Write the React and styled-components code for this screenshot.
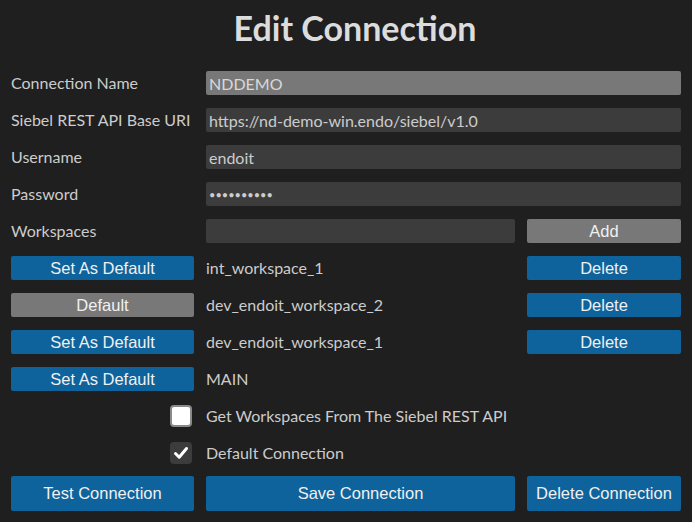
import React from 'react';
import styled, { createGlobalStyle } from 'styled-components';

const GlobalStyle = createGlobalStyle`
    html, body {
        margin: 0;
        padding: 0;
        background-color: #1f1f1f;
    }
    body {
        font-family: Lato, "Noto Sans", sans-serif;
        color: #cccccc;
    }
`;

const PageStyle = styled.div`
    width: 692px;
    height: 522px;
    box-sizing: border-box;
    padding: 0 11px;
    background-color: #1f1f1f;
`;

const TitleStyle = styled.h1`
    margin: 0;
    height: 71px;
    padding: 8px 0 0 18px;
    box-sizing: border-box;
    text-align: center;
    font-family: Lato, "Noto Sans", sans-serif;
    font-size: 34px;
    font-weight: 700;
    color: #dcdcdc;
    line-height: 40px;
`;

const FormGridStyle = styled.div`
    display: grid;
    grid-template-columns: 183px 309px 154px;
    grid-auto-rows: 24px;
    column-gap: 12px;
    row-gap: 13px;
`;

const LabelStyle = styled.label`
    display: flex;
    align-items: center;
    padding-bottom: 2px;
    font-size: 16px;
    color: #cccccc;
    white-space: nowrap;
    ${({ span }) => span && `grid-column: span ${span};`}
`;

const InputStyle = styled.input`
    box-sizing: border-box;
    width: 100%;
    height: 24px;
    margin: 0;
    padding: 0 3px;
    border: none;
    border-radius: 2px;
    outline: none;
    font-family: Lato, "Noto Sans", sans-serif;
    font-size: ${({ type }) => (type === 'password' ? '11px' : '16px')};
    color: #cccccc;
    background-color: ${({ disabled }) => (disabled ? '#787878' : '#3c3c3c')};
    ${({ span }) => span && `grid-column: span ${span};`}
    &:disabled {
        color: #d8d8d8;
    }
`;

const ButtonStyle = styled.button`
    box-sizing: border-box;
    width: 100%;
    height: ${({ tall }) => (tall ? '35px' : '24px')};
    margin: 0;
    padding: 0;
    border: none;
    border-radius: 2px;
    font-family: "Liberation Sans", Arial, sans-serif;
    font-size: 16.5px;
    color: #f0f0f0;
    background-color: ${({ muted }) => (muted ? '#787878' : '#0e639c')};
    cursor: pointer;
`;

const BottomRowStyle = styled.div`
    grid-column: 1 / -1;
    display: grid;
    grid-template-columns: 183px 309px 154px;
    column-gap: 12px;
    height: 35px;
    margin-top: -2px;
`;

const CheckCellStyle = styled.div`
    display: flex;
    align-items: center;
    justify-content: flex-end;
    padding-right: 2px;
`;

const CheckBoxStyle = styled.span`
    box-sizing: border-box;
    width: 22px;
    height: 22px;
    border-radius: 4px;
    display: flex;
    align-items: center;
    justify-content: center;
    background-color: ${({ checked }) => (checked ? '#3c3c3c' : '#ffffff')};
    border: 2px solid ${({ checked }) => (checked ? '#3c3c3c' : '#8a8a8a')};
`;

const workspaces = [
    { name: 'int_workspace_1', isDefault: false, deletable: true },
    { name: 'dev_endoit_workspace_2', isDefault: true, deletable: true },
    { name: 'dev_endoit_workspace_1', isDefault: false, deletable: true },
    { name: 'MAIN', isDefault: false, deletable: false },
];

const CheckMark = () => (
    <svg width="16" height="16" viewBox="0 0 16 16">
        <path d="M2.5 8.5 L6.2 12.2 L13.5 3.5" fill="none" stroke="#ffffff" strokeWidth="3" strokeLinecap="round" strokeLinejoin="round" />
    </svg>
);

const App = () => {
    return (
        <PageStyle>
            <GlobalStyle />
            <TitleStyle>Edit Connection</TitleStyle>
            <FormGridStyle>
                <LabelStyle>Connection Name</LabelStyle>
                <InputStyle span={2} disabled value="NDDEMO" readOnly />

                <LabelStyle>Siebel REST API Base URI</LabelStyle>
                <InputStyle span={2} value="https://nd-demo-win.endo/siebel/v1.0" readOnly />

                <LabelStyle>Username</LabelStyle>
                <InputStyle span={2} value="endoit" readOnly />

                <LabelStyle>Password</LabelStyle>
                <InputStyle span={2} type="password" value="secretpass" readOnly />

                <LabelStyle>Workspaces</LabelStyle>
                <InputStyle value="" readOnly />
                <ButtonStyle muted>Add</ButtonStyle>

                {workspaces.map((ws) => (
                    <React.Fragment key={ws.name}>
                        <ButtonStyle muted={ws.isDefault}>
                            {ws.isDefault ? 'Default' : 'Set As Default'}
                        </ButtonStyle>
                        <LabelStyle>{ws.name}</LabelStyle>
                        {ws.deletable ? <ButtonStyle>Delete</ButtonStyle> : <div />}
                    </React.Fragment>
                ))}

                <CheckCellStyle>
                    <CheckBoxStyle />
                </CheckCellStyle>
                <LabelStyle span={2}>Get Workspaces From The Siebel REST API</LabelStyle>

                <CheckCellStyle>
                    <CheckBoxStyle checked>
                        <CheckMark />
                    </CheckBoxStyle>
                </CheckCellStyle>
                <LabelStyle span={2}>Default Connection</LabelStyle>

                <BottomRowStyle>
                    <ButtonStyle tall>Test Connection</ButtonStyle>
                    <ButtonStyle tall>Save Connection</ButtonStyle>
                    <ButtonStyle tall>Delete Connection</ButtonStyle>
                </BottomRowStyle>
            </FormGridStyle>
        </PageStyle>
    );
};

export default App;
